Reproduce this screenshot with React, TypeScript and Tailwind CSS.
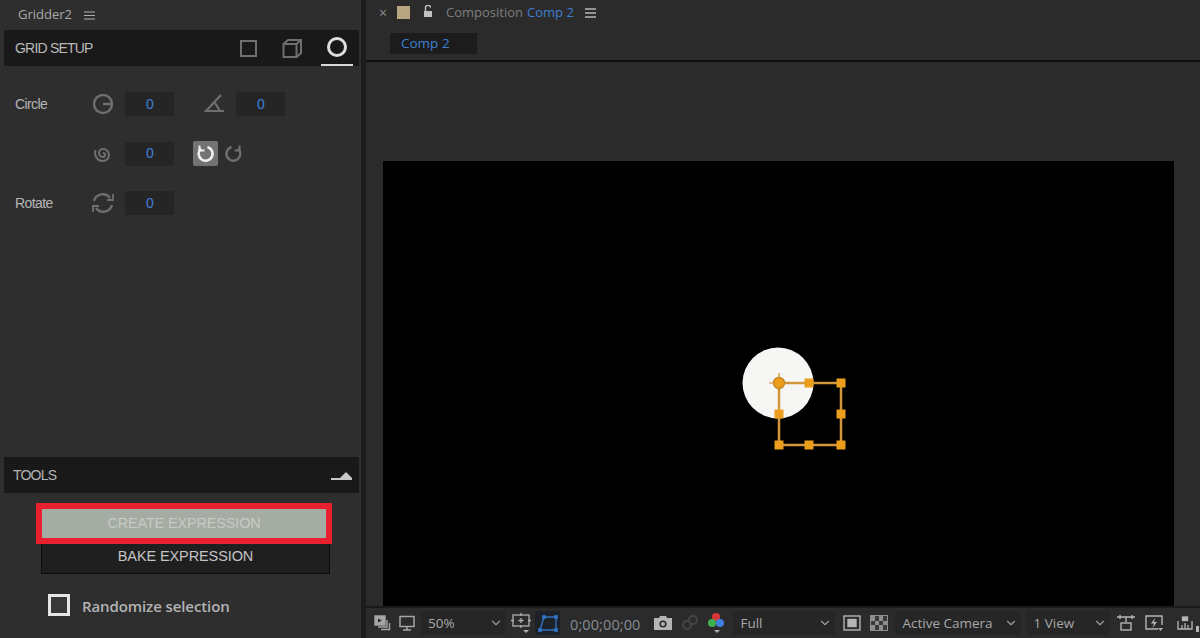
import { ChevronDown } from 'lucide-react';
import type { ReactNode } from 'react';

function NumberBox() {
  return (
    <div className="flex h-[24px] w-[49px] items-center justify-center bg-[#252525] text-[14px] text-[#3f7fd6]">
      0
    </div>
  );
}

function Gray({ children, size = 24 }: { children: ReactNode; size?: number }) {
  return (
    <svg width={size} height={size} viewBox="0 0 24 24" fill="none" stroke="#6f6f6f" strokeWidth="2.4">
      {children}
    </svg>
  );
}

function Drop({ label, width, labelClass = '' }: { label: string; width: string; labelClass?: string }) {
  return (
    <div className={`flex h-[24px] items-center justify-between rounded-[2px] bg-[#262626] pl-[7px] pr-[3px] ${width}`}>
      <span className={`text-[13.5px] text-[#a8a8a8] ${labelClass}`}>{label}</span>
      <ChevronDown size={14} strokeWidth={2} className="text-[#9a9a9a]" />
    </div>
  );
}

function Toolbar() {
  return (
    <div className="flex h-[30px] items-center pl-[6px] font-['Open_Sans',sans-serif]">
      <svg width="18" height="18" viewBox="0 0 18 18" fill="none" stroke="#a5a5a5" strokeWidth="1.4" className="ml-[1px] mr-[7px]">
        <rect x="2" y="2" width="10" height="9" fill="#a5a5a5" />
        <path d="M5 4.5l4 2-4 2z" fill="#2b2b2b" stroke="none" />
        <path d="M14 6v7H5M16.5 9v6.5H8" />
      </svg>
      <svg width="18" height="18" viewBox="0 0 18 18" fill="none" stroke="#a5a5a5" strokeWidth="1.5" className="mr-[5px]">
        <rect x="2" y="2.5" width="14" height="10" />
        <path d="M5 16h8M9 13v3" />
      </svg>
      <Drop label="50%" width="w-[85px]" />
      <svg width="22" height="24" viewBox="0 0 22 24" fill="none" stroke="#b0b0b0" strokeWidth="1.3" className="ml-[4px]">
        <rect x="3" y="4" width="16" height="11" />
        <path d="M11 7v5M8.500 9.500h5M1 9.500h3M18 9.500h3M11 2v3M11 14v3" />
        <path d="M13 19h6l-3 3z" fill="#b0b0b0" stroke="none" />
      </svg>
      <div className="ml-[3px] flex h-[24px] w-[25px] items-center justify-center rounded-[2px] bg-[#1d2128]">
        <svg width="20" height="18" viewBox="0 0 20 18" fill="none" stroke="#3273c4" strokeWidth="1.300">
          <path d="M2 16L6 3h12v13z" />
          <rect x="0.800" y="14.800" width="2.400" height="2.400" fill="#3273c4" />
          <rect x="16.800" y="14.800" width="2.400" height="2.400" fill="#3273c4" />
          <rect x="16.800" y="1.800" width="2.400" height="2.400" fill="#3273c4" />
          <rect x="4.800" y="1.800" width="2.400" height="2.400" fill="#3273c4" />
        </svg>
      </div>
      <span className="ml-[10px] mt-[4px] text-[14.5px] tracking-[0.1px] text-[#848b94]">0;00;00;00</span>
      <svg width="20" height="16" viewBox="0 0 20 16" className="ml-[13px]">
        <path d="M1 3h5l1-2h6l1 2h5v12H1z" fill="#b5b5b5" />
        <circle cx="10" cy="9" r="3.6" fill="#2b2b2b" />
        <circle cx="10" cy="9" r="2" fill="#b5b5b5" />
      </svg>
      <svg width="20" height="18" viewBox="0 0 20 18" fill="none" stroke="#454545" strokeWidth="2" className="ml-[7px]">
        <circle cx="7" cy="11" r="4" />
        <circle cx="13" cy="6" r="4" />
      </svg>
      <svg width="18" height="24" viewBox="0 0 18 24" className="ml-[7px]">
        <circle cx="9" cy="6" r="4" fill="#d9363a" />
        <circle cx="5" cy="12" r="4" fill="#3fae4e" />
        <circle cx="13" cy="12" r="4" fill="#3f7fe0" />
        <path d="M7 19h6l-3 3z" fill="#b0b0b0" />
      </svg>
      <Drop label="Full" width="w-[102px] ml-[8px]" />
      <svg width="18" height="16" viewBox="0 0 18 16" fill="none" stroke="#b5b5b5" strokeWidth="1.4" className="ml-[8px]">
        <rect x="1" y="1" width="16" height="14" />
        <rect x="5" y="4.5" width="8" height="7" fill="#b5b5b5" />
      </svg>
      <div className="ml-[9px] grid h-[16px] w-[18px] grid-cols-4 grid-rows-3 border border-[#8f8f8f]">
        {Array.from({ length: 12 }, (_, i) => (
          <span key={i} className={(i + (i >> 2)) % 2 ? 'bg-[#3a3a3a]' : 'bg-[#8f8f8f]'} />
        ))}
      </div>
      <Drop label="Active Camera" width="w-[126px] ml-[7px]" />
      <Drop label="1 View" width="w-[84px] ml-[5px]" />
      <svg width="20" height="18" viewBox="0 0 20 18" fill="none" stroke="#b5b5b5" strokeWidth="1.4" className="ml-[6px]">
        <path d="M1 3h18M4 1v4M16 1v4M10 3v5" />
        <rect x="5" y="9" width="10" height="7" />
      </svg>
      <svg width="20" height="18" viewBox="0 0 20 18" fill="none" stroke="#b5b5b5" strokeWidth="1.4" className="ml-[8px]">
        <path d="M14 15H2V2h16v9" />
        <path d="M11 4L7 9.5h3L8.5 14l4.5-6h-3z" fill="#b5b5b5" stroke="none" />
        <path d="M14 14h5l-2.500 3z" fill="#b5b5b5" stroke="none" />
      </svg>
      <svg width="18" height="16" viewBox="0 0 18 16" fill="none" stroke="#b5b5b5" strokeWidth="1.3" className="ml-[12px]">
        <path d="M2 6v8h14V6M6 10v4M9 8v6M12 10v4" />
        <rect x="6.500" y="2" width="5" height="3.500" fill="#b5b5b5" />
      </svg>
      <span className="ml-[2px] mt-[12px] h-[6px] w-[3px] bg-[#b5b5b5]" />
    </div>
  );
}

function Handle({ x, y }: { x: number; y: number }) {
  return <rect x={x - 4.5} y={y - 4.5} width="9" height="9" fill="#eb9d1b" />;
}

export default function App() {
  return (
    <div className="flex h-[638px] w-[1200px] overflow-hidden bg-[#1c1c1c] font-['Liberation_Sans',sans-serif]">
      <aside className="flex h-full w-[361px] flex-col bg-[#2e2e2e] pl-[4px] pr-[2px]">
        <div className="flex h-[30px] items-center pl-[14px] font-['Open_Sans',sans-serif] text-[13px] text-[#a9a9a9]">
          Gridder2
          <svg width="11" height="9" viewBox="0 0 11 9" stroke="#b0b0b0" strokeWidth="1.2" className="ml-[12px]">
            <path d="M0 1h11M0 4.500h11M0 8h11" />
          </svg>
        </div>

        <div className="flex h-[36px] items-center bg-[#191919] pl-[11px]">
          <span className="text-[14px] -tracking-[0.8px] text-[#b9b9b9]">GRID SETUP</span>
          <div className="ml-auto flex h-full items-center">
            <span className="mr-[25px] mt-[1px] h-[17px] w-[17px] border-[2.5px] border-[#6f6f6f]" />
            <svg width="21" height="21" viewBox="0 0 21 21" fill="none" stroke="#6f6f6f" strokeWidth="2" className="mr-[18px]">
              <rect x="1.500" y="6" width="13" height="13" />
              <path d="M1.500 6L6 2h13v13l-4.500 4M14.500 6L19 2" />
            </svg>
            <div className="mr-[6px] flex h-full w-[32px] items-center justify-center border-b-2 border-[#d8d8d8]">
              <span className="h-[20px] w-[20px] rounded-full border-[3px] border-[#dedede]" />
            </div>
          </div>
        </div>

        <div className="grid grid-cols-[76px_34px_49px_1fr] items-center gap-y-[25px] pl-[11px] pt-[26px] text-[14px] -tracking-[0.6px] text-[#b5b5b5]">
          <span>Circle</span>
          <Gray>
            <circle cx="12" cy="12" r="9" />
            <path d="M12 12h9" />
          </Gray>
          <NumberBox />
          <div className="flex items-center">
            <svg width="24" height="24" viewBox="0 0 24 24" fill="none" stroke="#6f6f6f" strokeWidth="2.200" className="ml-[28px] mr-[10px]">
              <path d="M19 3L4 19h18M13 11l5 8" />
            </svg>
            <NumberBox />
          </div>

          <span />
          <Gray>
            <path d="M12 11A2 2 0 0 1 12 15A4 4 0 0 1 12 7A6 6 0 0 1 12 19A8 8 0 0 1 4.500 8.200" strokeWidth="2" />
          </Gray>
          <NumberBox />
          <div className="flex items-center">
            <span className="ml-[19px] flex h-[25px] w-[25px] items-center justify-center rounded-[2px] bg-[#737373]">
              <svg width="19" height="19" viewBox="0 0 19 19" fill="none" stroke="#f0f0f0" strokeWidth="2.600">
                <path d="M5 4.500a7 7 0 1 0 6.500-1.500" />
                <path d="M3.500 1.500v5h5" strokeWidth="2" />
              </svg>
            </span>
            <svg width="19" height="19" viewBox="0 0 19 19" fill="none" stroke="#6f6f6f" strokeWidth="2.400" className="ml-[6px]">
              <path d="M14 4.500a7 7 0 1 1-6.500-1.500" />
              <path d="M15.500 1.500v5h-5" strokeWidth="2" />
            </svg>
          </div>

          <span>Rotate</span>
          <Gray>
            <path d="M3 10a9 9 0 0 1 16-3M21 14a9 9 0 0 1-16 3" />
            <path d="M22 3v6h-6M2 21v-6h6" strokeWidth="1.800" />
          </Gray>
          <NumberBox />
          <span />
        </div>

        <div className="mt-auto flex h-[36px] items-center justify-between bg-[#191919] pl-[9px] pr-[7px]">
          <span className="text-[14px] -tracking-[0.8px] text-[#b5b5b5]">TOOLS</span>
          <svg width="21" height="10" viewBox="0 0 21 10">
            <path d="M0 8h21v2H0z" fill="#c8c8c8" />
            <path d="M9 8l6-6 6 6z" fill="#c8c8c8" />
          </svg>
        </div>

        <div className="flex h-[145px] flex-col pl-[32px] pr-[28px] pt-[10px]">
          <button className="flex h-[41px] w-[296px] items-center justify-center border-[6px] border-[#e8202f] bg-[#a5aca3] text-[14.4px] -tracking-[0.1px] text-[#c7cbc5]">
            CREATE EXPRESSION
          </button>
          <button className="ml-[5px] flex h-[30px] w-[289px] items-center justify-center border border-t-0 border-[#0c0c0c] bg-[#1f1f1f] pb-[4px] text-[14.5px] -tracking-[0.1px] text-[#c4c4c4]">
            BAKE EXPRESSION
          </button>
          <label className="ml-[12px] mt-[19px] flex items-center">
            <span className="h-[22px] w-[22px] border-[3px] border-[#e6e6e6] bg-[#383838]" />
            <span className="ml-[12px] mt-[2px] font-['Open_Sans',sans-serif] text-[15px] font-semibold -tracking-[0.1px] text-[#b3b3b3]">
              Randomize selection
            </span>
          </label>
        </div>
      </aside>

      <div className="w-[5px]" />

      <main className="flex h-full min-w-0 flex-1 flex-col bg-[#2b2b2b]">
        <div className="flex h-[25px] items-center pl-[13px] font-['Open_Sans',sans-serif] text-[13px]">
          <span className="text-[14px] leading-none text-[#8f8f8f]">×</span>
          <span className="ml-[10px] h-[13px] w-[13px] bg-[#b7a680]" />
          <svg width="12" height="13" viewBox="0 0 12 13" className="ml-[12px] mb-[3px]">
            <path d="M2 6h8v6H2z" fill="#c0c0c0" />
            <path d="M3.500 6V3a2.500 2.500 0 0 1 5-.5" fill="none" stroke="#c0c0c0" strokeWidth="1.400" />
          </svg>
          <span className="ml-[12px] text-[#7e7e7e]">Composition</span>
          <span className="ml-[4px] text-[#3f7fd0]">Comp 2</span>
          <svg width="11" height="10" viewBox="0 0 11 10" stroke="#b8b8b8" strokeWidth="1.300" className="ml-[11px]">
            <path d="M0 1h11M0 5h11M0 9h11" />
          </svg>
        </div>
        <div className="h-[35px] pl-[24px] pt-[8px]">
          <div className="flex h-[21px] w-[87px] items-center rounded-[1px] bg-[#1c1c1c] pl-[11px] font-['Open_Sans',sans-serif] text-[13.5px] text-[#3f7fd0]">
            Comp 2
          </div>
        </div>
        <div className="h-[2px] bg-[#0f0f0f]" />

        <div className="flex min-h-0 flex-1 flex-col pl-[17px] pr-[26px] pt-[99px]">
          <div className="relative h-[445px] bg-black">
            <svg width="130" height="125" viewBox="0 0 130 125" className="absolute left-[347px] top-[174px]">
              <circle cx="48" cy="48" r="35.500" fill="#f6f6f4" />
              <path d="M49 48h62v62H49z" fill="none" stroke="#d2963c" strokeWidth="2.500" />
              <circle cx="49" cy="48" r="5.500" fill="#eb9d1b" stroke="#c98a2a" strokeWidth="1.500" />
              <path d="M39 48h4M55 48h4M49 38v4M49 54v4" stroke="#c98a2a" strokeWidth="1.200" />
              <Handle x={79} y={48} />
              <Handle x={111} y={48} />
              <Handle x={49} y={79} />
              <Handle x={111} y={79} />
              <Handle x={49} y={110} />
              <Handle x={79} y={110} />
              <Handle x={111} y={110} />
            </svg>
          </div>
        </div>
        <div className="-mt-[2px] h-[2px] bg-[#1a1a1a]" />
        <Toolbar />
      </main>
    </div>
  );
}
